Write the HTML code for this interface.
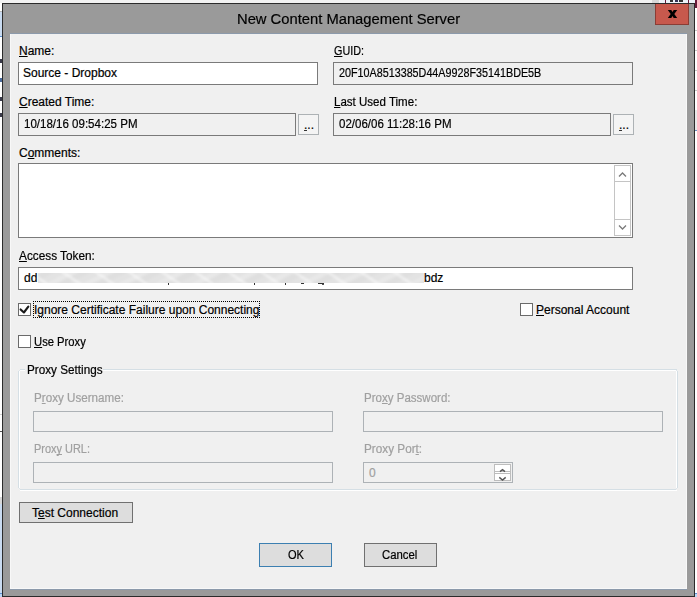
<!DOCTYPE html>
<html><head><meta charset="utf-8">
<style>
*{margin:0;padding:0;box-sizing:border-box}
html,body{width:697px;height:597px;overflow:hidden;background:#ffffff;position:relative}
body{font-family:"Liberation Sans",sans-serif;color:#000}
div{position:absolute}
.t{white-space:nowrap;font-size:12px;line-height:12px;transform-origin:0 0;-webkit-text-stroke:0.2px currentColor}
.u{text-decoration:underline;text-decoration-skip-ink:none}
.in{border:1px solid #7a7a7a;background:#fff}
.ro{background:#f0f0f0}
.dis{border:1px solid #adb2b6;background:#f0f0f0}
.g{color:#a0a0a0}
.btn{border:1px solid #707070;background:#dddddd}
.cb{width:13px;height:13px;border:1px solid #6a6a6a;background:#fff}
.dots{border:1px solid #adb2b5;background:#f4f4f4}
</style></head><body>
<!-- background strips -->
<div style="left:0;top:0;width:697px;height:3px;background:#f2f2f2"></div>
<div style="left:0;top:11px;width:2px;height:1px;background:#b8b8b8"></div>
<div style="left:0;top:12px;width:2px;height:24px;background:#c9dbf1"></div>
<div style="left:0;top:36px;width:2px;height:1px;background:#5b8fd0"></div>
<div style="left:0;top:59px;width:2px;height:4px;background:#3a3a4a"></div>
<div style="left:0;top:78px;width:2px;height:4px;background:#4a6a9a"></div>
<div style="left:0;top:97px;width:2px;height:4px;background:#3a3a4a"></div>
<div style="left:0;top:113px;width:2px;height:4px;background:#3a3a4a"></div>
<div style="left:0;top:414px;width:2px;height:1px;background:#d0d0d0"></div>
<div style="left:0;top:431px;width:2px;height:1px;background:#505050"></div>
<div style="left:0;top:497px;width:2px;height:7px;background:#d8d8d8"></div>
<div style="left:0;top:504px;width:2px;height:89px;background:#c9dbf1"></div>
<div style="left:0;top:593px;width:2px;height:1px;background:#5b8fd0"></div>
<div style="left:0;top:594px;width:2px;height:3px;background:#b9d6f7"></div>
<div style="left:695px;top:0;width:2px;height:8px;background:#6a1a3a"></div>
<div style="left:695px;top:30px;width:2px;height:1px;background:#c8c8c8"></div>
<div style="left:695px;top:50px;width:2px;height:1px;background:#c8c8c8"></div>
<div style="left:695px;top:70px;width:2px;height:1px;background:#c8c8c8"></div>
<div style="left:695px;top:90px;width:2px;height:1px;background:#c8c8c8"></div>
<div style="left:695px;top:110px;width:2px;height:20px;background:#e8e8e8"></div>
<div style="left:695px;top:130px;width:2px;height:1px;background:#6a8fc0"></div>
<div style="left:695px;top:593px;width:2px;height:1px;background:#5b8fd0"></div>
<div style="left:695px;top:594px;width:2px;height:3px;background:#b9d6f7"></div>
<div style="left:652px;top:0;width:7px;height:3px;background:#d8d8d8"></div>
<div style="left:660px;top:0;width:35px;height:3px;background:#eef3fa"></div>
<div style="left:665px;top:0;width:1px;height:3px;background:#6a1a3a"></div>
<div style="left:670px;top:0;width:3px;height:2px;background:#333"></div>
<div style="left:675px;top:0;width:3px;height:2px;background:#335"></div>
<div style="left:679px;top:0;width:4px;height:2px;background:#333"></div>
<div style="left:688px;top:0;width:1px;height:3px;background:#6a1a3a"></div>

<!-- window -->
<div style="left:2px;top:3px;width:693px;height:594px;border:1px solid #2b2b2b;background:#9a9a9a"></div>
<div style="left:10px;top:33px;width:677px;height:1px;background:#8c9aab"></div>
<div style="left:10px;top:589px;width:677px;height:1px;background:#8c9aab"></div>
<div style="left:10px;top:34px;width:677px;height:555px;background:#f0f0f0;border-left:1px solid #f8f8f8;border-right:1px solid #f8f8f8;border-bottom:1px solid #f8f8f8"></div>

<!-- title -->
<div class="t" id="title" style="transform:scaleX(0.952);left:237px;top:10.5px;font-size:15.5px;line-height:15.5px">New Content Management Server</div>
<!-- close -->
<div style="left:655px;top:4px;width:34px;height:21px;background:#c7594d;border:1px solid #8a3d35;border-top:none"></div>
<svg style="position:absolute;left:667px;top:10px" width="11" height="8" viewBox="0 0 11 8"><path d="M0.8 0 L4.3 0 L5.5 1.9 L6.7 0 L10.2 0 L7.3 4 L10.2 8 L6.7 8 L5.5 6.1 L4.3 8 L0.8 8 L3.7 4 Z" fill="#000"/></svg>

<!-- row 1 -->
<div class="t" id="l_name" style="left:19px;top:45px"><span class="u">N</span>ame:</div>
<div class="in" style="left:18px;top:62px;width:300px;height:23px"></div>
<div class="t" id="v_name" style="left:23px;top:67px">Source - Dropbox</div>
<div class="t" id="l_guid" style="transform:scaleX(0.897);left:334px;top:45px"><span class="u">G</span>UID:</div>
<div class="in ro" style="left:333px;top:62px;width:300px;height:23px"></div>
<div class="t" id="v_guid" style="transform:scaleX(0.897);left:339px;top:67px">20F10A8513385D44A9928F35141BDE5B</div>

<!-- row 2 -->
<div class="t" id="l_created" style="left:19px;top:96px"><span class="u">C</span>reated Time:</div>
<div class="in ro" style="left:18px;top:113px;width:278px;height:23px"></div>
<div class="t" id="v_created" style="transform:scaleX(0.961);left:24px;top:118px">10/18/16 09:54:25 PM</div>
<div class="dots" style="left:298px;top:114px;width:21px;height:21px"></div>
<div class="t" style="left:304px;top:119px">...</div>
<div style="left:304px;top:130px;width:3px;height:1px;background:#333"></div>
<div class="t" id="l_last" style="transform:scaleX(0.961);left:334px;top:96px"><span class="u">L</span>ast Used Time:</div>
<div class="in ro" style="left:333px;top:113px;width:278px;height:23px"></div>
<div class="t" id="v_last" style="transform:scaleX(0.96);left:339px;top:118px">02/06/06 11:28:16 PM</div>
<div class="dots" style="left:613px;top:114px;width:21px;height:21px"></div>
<div class="t" style="left:619px;top:119px">...</div>
<div style="left:619px;top:130px;width:3px;height:1px;background:#333"></div>

<!-- comments -->
<div class="t" id="l_comments" style="left:19px;top:147px">C<span class="u">o</span>mments:</div>
<div class="in" style="left:18px;top:163px;width:615px;height:75px"></div>
<div style="left:614px;top:165px;width:17px;height:71px;border:1px solid #c4c4c4;background:#fff"></div>
<div style="left:614px;top:181px;width:17px;height:1px;background:#c4c4c4"></div>
<div style="left:614px;top:219px;width:17px;height:1px;background:#c4c4c4"></div>
<svg style="position:absolute;left:614px;top:165px" width="17" height="71" viewBox="0 0 17 71"><path d="M5 11.5 L8.5 8 L12 11.5" stroke="#7a7a7a" stroke-width="1.3" fill="none"/><path d="M5 60.5 L8.5 64 L12 60.5" stroke="#7a7a7a" stroke-width="1.3" fill="none"/></svg>

<!-- token -->
<div class="t" id="l_token" style="transform:scaleX(0.983);left:19px;top:250px"><span class="u">A</span>ccess Token:</div>
<div class="in" style="left:18px;top:267px;width:615px;height:23px"></div>
<div class="t" id="v_dd" style="left:24px;top:272px">dd</div>
<div style="left:38px;top:273px;width:386px;height:10px;overflow:hidden"><div style="left:-3px;top:-3px;width:392px;height:16px;background:repeating-linear-gradient(35deg,rgba(255,255,255,0) 0 7px,rgba(255,255,255,.45) 7px 10px,rgba(255,255,255,0) 10px 19px),repeating-linear-gradient(-28deg,#dfdfdf 0 6px,#e8e8e8 6px 11px,#e3e3e3 11px 17px);filter:blur(0.8px)"></div></div>
<div style="left:168px;top:283px;width:1px;height:2px;background:#333"></div>
<div style="left:254px;top:283px;width:1px;height:2px;background:#333"></div>
<div style="left:285px;top:283px;width:1px;height:2px;background:#333"></div>
<div style="left:301px;top:283px;width:3px;height:1px;background:#333"></div>
<div style="left:318px;top:283px;width:6px;height:1px;background:#333"></div><div style="left:322px;top:284px;width:2px;height:1px;background:#555"></div>
<div class="t" id="v_bdz" style="left:424px;top:272px">bdz</div>

<!-- checkboxes -->
<div class="cb" style="left:18px;top:303px"></div>
<svg style="position:absolute;left:18px;top:303px" width="13" height="13" viewBox="0 0 13 13"><path d="M2.6 6.4 L5.9 9.5 L10.3 3.6" stroke="#1a1a1a" stroke-width="2.1" fill="none" stroke-linecap="round" stroke-linejoin="round"/></svg>
<div style="left:33px;top:301px;width:227px;height:17px;border:1px dotted #000"></div>
<div class="t" id="l_ignore" style="left:34px;top:304px">Ignore Certificate Failure upon Connecting</div>
<div class="cb" style="left:520px;top:303px"></div>
<div class="t" id="l_personal" style="left:536px;top:304px"><span class="u">P</span>ersonal Account</div>
<div class="cb" style="left:18px;top:335px"></div>
<div class="t" id="l_useproxy" style="transform:scaleX(0.937);left:34px;top:336px"><span class="u">U</span>se Proxy</div>

<!-- group -->
<div style="left:20px;top:369px;width:5px;height:1px;background:#d5dfe5"></div>
<div style="left:103px;top:369px;width:574px;height:1px;background:#d5dfe5"></div>
<div style="left:20px;top:370px;width:5px;height:1px;background:#fff"></div>
<div style="left:103px;top:370px;width:573px;height:1px;background:#fff"></div>
<div style="left:19px;top:370px;width:1px;height:1px;background:#dfe6eb"></div>
<div style="left:676px;top:370px;width:1px;height:1px;background:#dfe6eb"></div>
<div style="left:18px;top:371px;width:1px;height:117px;background:#d5dfe5"></div>
<div style="left:19px;top:371px;width:1px;height:117px;background:#fff"></div>
<div style="left:677px;top:371px;width:1px;height:117px;background:#d5dfe5"></div>
<div style="left:676px;top:371px;width:1px;height:117px;background:#fff"></div>
<div style="left:19px;top:488px;width:1px;height:1px;background:#dfe6eb"></div>
<div style="left:676px;top:488px;width:1px;height:1px;background:#dfe6eb"></div>
<div style="left:20px;top:489px;width:656px;height:1px;background:#d5dfe5"></div>
<div style="left:20px;top:490px;width:657px;height:1px;background:#fff"></div>
<div class="t" id="l_group" style="transform:scaleX(0.976);left:27px;top:364px">Proxy Settings</div>

<div class="t g" id="l_user" style="transform:scaleX(0.97);left:34px;top:392px">P<span class="u">r</span>oxy Username:</div>
<div class="dis" style="left:33px;top:411px;width:300px;height:21px"></div>
<div class="t g" id="l_pass" style="transform:scaleX(0.961);left:364px;top:392px">Pro<span class="u">x</span>y Password:</div>
<div class="dis" style="left:363px;top:411px;width:300px;height:21px"></div>
<div class="t g" id="l_url" style="transform:scaleX(0.912);left:34px;top:443px">Prox<span class="u">y</span> URL:</div>
<div class="dis" style="left:33px;top:462px;width:300px;height:21px"></div>
<div class="t g" id="l_port" style="transform:scaleX(0.979);left:364px;top:443px">Proxy Por<span class="u">t</span>:</div>
<div class="dis" style="left:363px;top:462px;width:150px;height:21px"></div>
<div class="t g" id="v_port" style="left:369px;top:467px">0</div>
<svg style="position:absolute;left:494px;top:464px" width="17" height="17" viewBox="0 0 17 17"><rect x="0.5" y="0.5" width="16" height="16" fill="#fff" stroke="#bdbdbd"/><path d="M0 7.5 H17 M0 9.5 H17" stroke="#bdbdbd"/><path d="M6 7.6 L8.5 5.6 L11 7.6" stroke="#555" stroke-width="1.4" fill="none"/><path d="M5.3 13.4 L8.5 16 L11.7 13.4" stroke="#555" stroke-width="1.4" fill="none"/></svg>

<!-- buttons -->
<div class="btn" style="left:19px;top:502px;width:114px;height:21px"></div>
<div class="t" id="l_test" style="left:32px;top:507px">T<span class="u">e</span>st Connection</div>
<div class="btn" style="left:259px;top:543px;width:73px;height:24px;border-color:#3c7fb1"></div>
<div class="t" id="l_ok" style="transform:scaleX(0.92);left:287.6px;top:549px">OK</div>
<div class="btn" style="left:364px;top:543px;width:73px;height:24px"></div>
<div class="t" id="l_cancel" style="transform:scaleX(0.946);left:382.4px;top:549px">Cancel</div>
</body></html>
